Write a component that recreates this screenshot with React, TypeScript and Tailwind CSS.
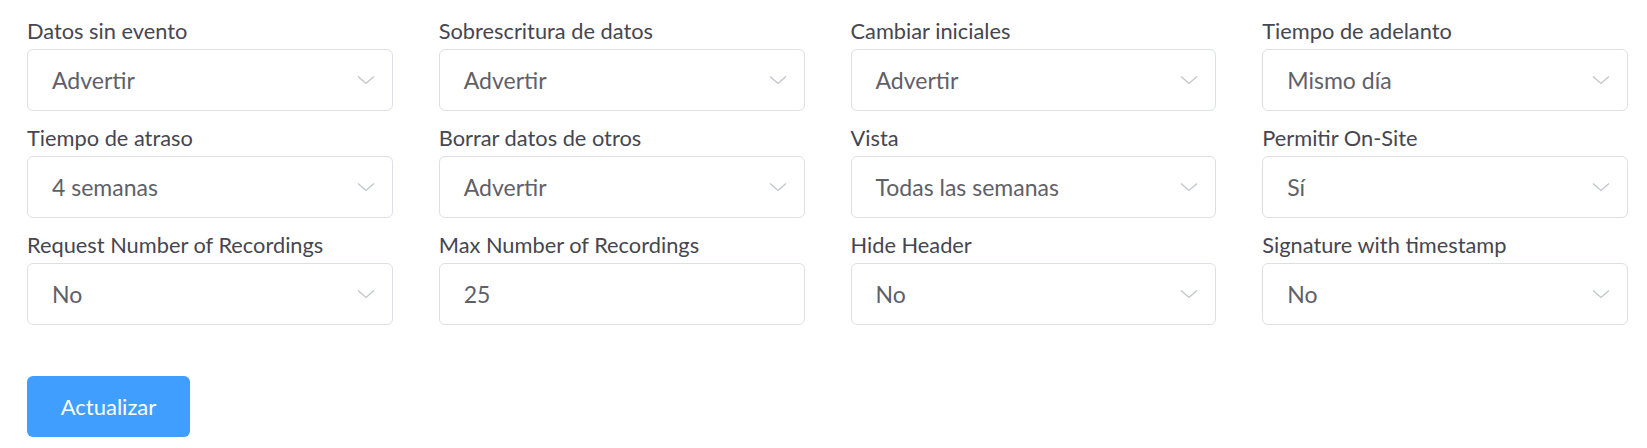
import React from "react";

type Field = { label: string; value: string; select?: boolean };

const fields: Field[] = [
  { label: "Datos sin evento", value: "Advertir", select: true },
  { label: "Sobrescritura de datos", value: "Advertir", select: true },
  { label: "Cambiar iniciales", value: "Advertir", select: true },
  { label: "Tiempo de adelanto", value: "Mismo día", select: true },
  { label: "Tiempo de atraso", value: "4 semanas", select: true },
  { label: "Borrar datos de otros", value: "Advertir", select: true },
  { label: "Vista", value: "Todas las semanas", select: true },
  { label: "Permitir On-Site", value: "Sí", select: true },
  { label: "Request Number of Recordings", value: "No", select: true },
  { label: "Max Number of Recordings", value: "25" },
  { label: "Hide Header", value: "No", select: true },
  { label: "Signature with timestamp", value: "No", select: true },
];

const Chevron = () => (
  <svg width="18" height="10" viewBox="0 0 18 10" fill="none" className="shrink-0">
    <path d="M1 1.5 L9 8.5 L17 1.5" stroke="#c0c4cc" strokeWidth="1.3" />
  </svg>
);

const App = () => {
  return (
    <div className="w-[1647px] h-[448px] bg-white font-['Lato',sans-serif] pl-[27px] pr-[19px] pt-[14px]">
      {/* fields grid */}
      <div className="grid grid-cols-4 gap-x-[46px] gap-y-[10px]">
        {fields.map((f) => (
          <div key={f.label} className="flex flex-col">
            <label className="h-[34px] mb-[1px] text-[21.8px] leading-[34px] text-[#46464f] whitespace-nowrap">
              {f.label}
            </label>
            <div className="h-[62px] border border-[#dcdfe6] rounded-[6px] flex items-center justify-between pl-[24px] pr-[17px]">
              <span className="text-[23px] text-[#5f6068]">{f.value}</span>
              {f.select && <Chevron />}
            </div>
          </div>
        ))}
      </div>
      {/* btn */}
      <div className="mt-[51px]">
        <button
          type="button"
          className="w-[163px] h-[61px] bg-[#409eff] rounded-[6px] text-white text-[22px]"
        >
          Actualizar
        </button>
      </div>
    </div>
  );
};

export default App;
